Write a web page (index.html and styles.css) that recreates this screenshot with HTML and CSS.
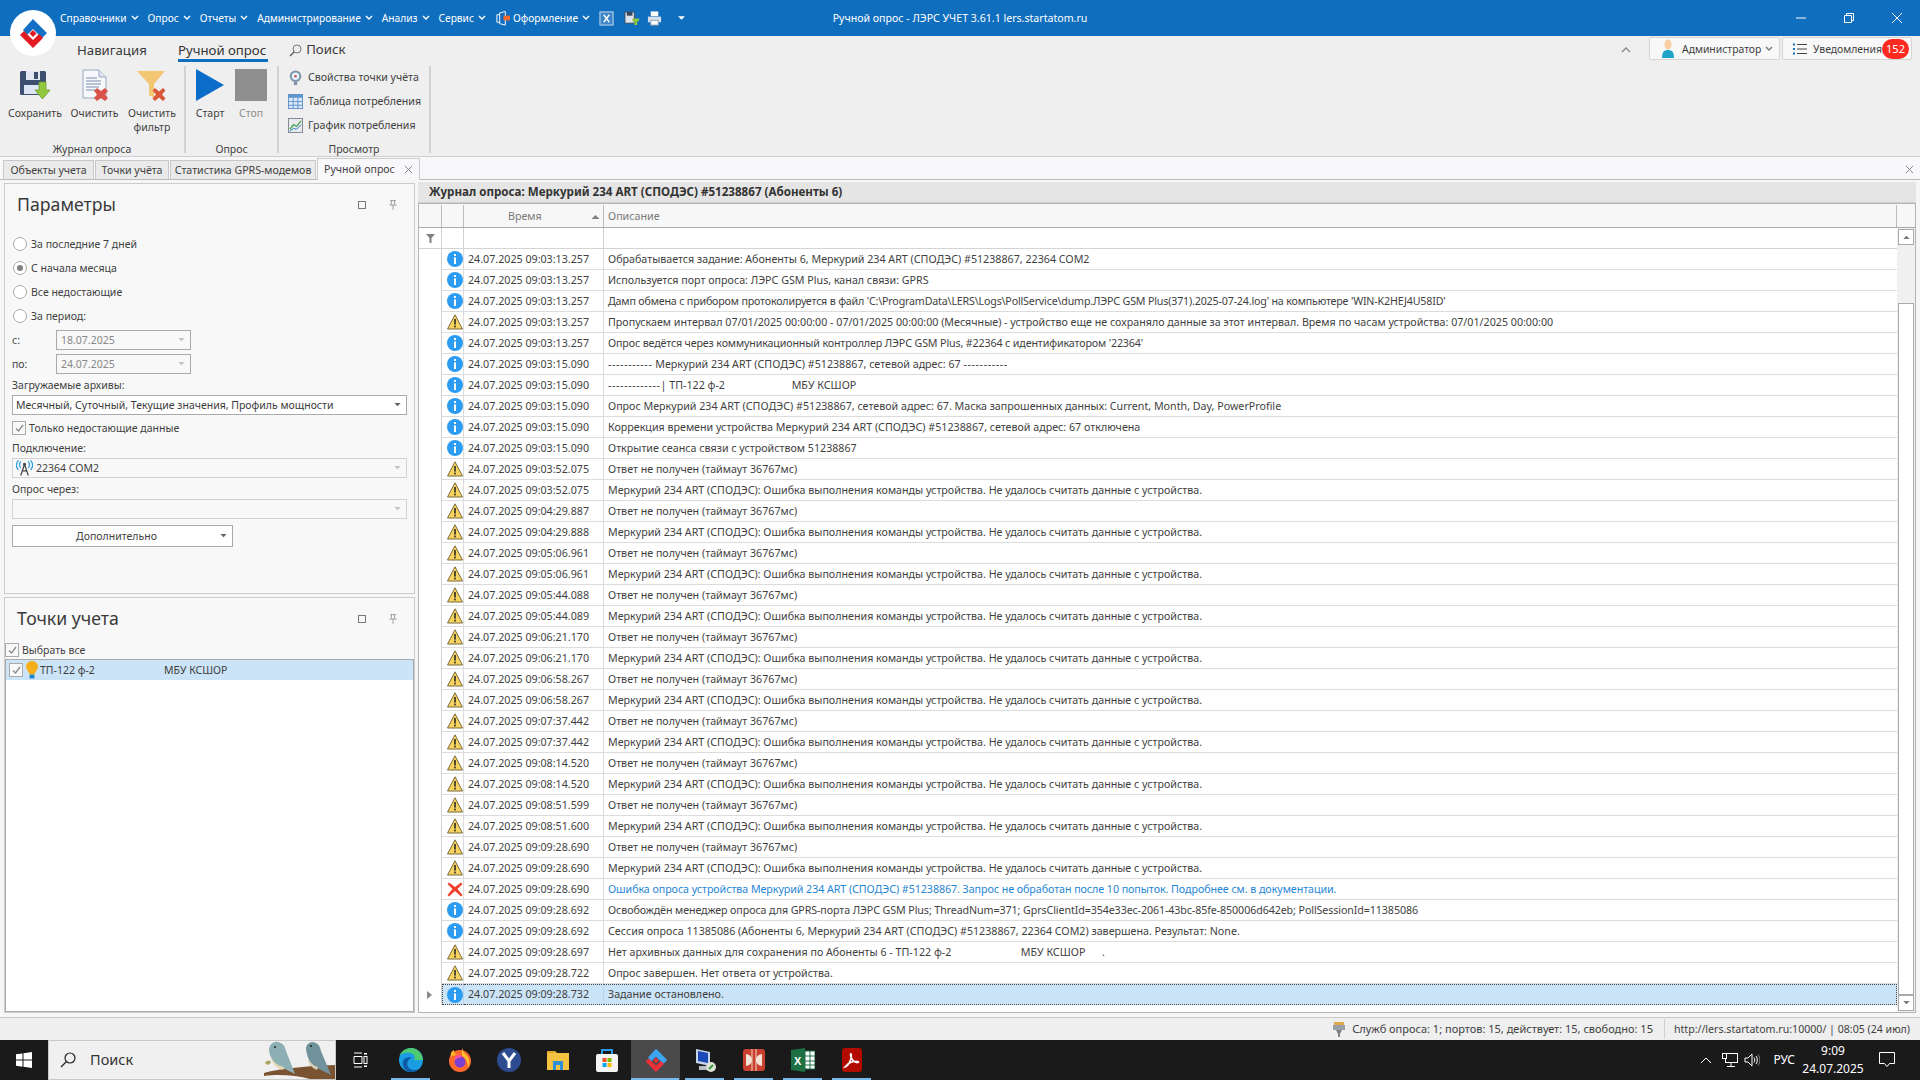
FILE: index.html
```html
<!DOCTYPE html>
<html lang="ru">
<head>
<meta charset="utf-8">
<title>Ручной опрос - ЛЭРС УЧЕТ</title>
<link rel="stylesheet" href="styles.css">
</head>
<body>
<svg class="defs" aria-hidden="true">
  <symbol id="chev" viewBox="0 0 8 6"><path d="M1 1l3 3 3-3" fill="none" stroke="currentColor" stroke-width="1.4"/></symbol>
  <symbol id="caret" viewBox="0 0 8 5"><path d="M0 0h8L4 4z" fill="currentColor"/></symbol>
  <symbol id="info" viewBox="0 0 16 16"><circle cx="8" cy="8" r="8" fill="#2b9cf2"/><rect x="7" y="3" width="2" height="2" fill="#fff"/><rect x="7" y="6.4" width="2" height="6.6" fill="#fff"/></symbol>
  <symbol id="warn" viewBox="0 0 16 16"><path d="M8 .8L15.5 15H.5z" fill="#f7d35f" stroke="#7b6a3d" stroke-width="1"/><rect x="7.1" y="5" width="1.8" height="5.6" fill="#3f3a2c"/><rect x="7.1" y="11.6" width="1.8" height="1.8" fill="#3f3a2c"/></symbol>
  <symbol id="err" viewBox="0 0 16 16"><path d="M2 1.5L8 6l6-4.5 1.5 1.5L10.5 8l5 6L14 15.5 8 10l-6 5.5L.5 14l5-6-5-5z" fill="#f0402c"/></symbol>
  <symbol id="logo" viewBox="0 0 30 30"><path d="M15 1l14 14-5 5-9-9-6 6-4-5z" fill="#1470c4"/><path d="M2 17l4-4 9 9 6-6 4 4-10 10z" fill="#e21b23"/><path d="M15 12l3.500 3.500L15 19l-3.500-3.500z" fill="#e21b23"/></symbol>
  <symbol id="xgray" viewBox="0 0 10 10"><path d="M1 1l8 8M9 1l-8 8" stroke="currentColor" stroke-width="1.1" fill="none"/></symbol>
  <symbol id="pin" viewBox="0 0 10 12"><path d="M1.500.5h7M3 .5v5M7 .5v5M.5 6h9M5 6v6" stroke="currentColor" fill="none"/></symbol>
  <symbol id="chk" viewBox="0 0 9 8"><path d="M1 4.500l2.500 2.500L8 1" fill="none" stroke="#8a8a8a" stroke-width="1.3"/></symbol>
</svg>

<div class="app">
  <header class="titlebar">
    <nav class="menu">
      <span class="mi">Справочники<svg class="chev"><use href="#chev"/></svg></span>
      <span class="mi">Опрос<svg class="chev"><use href="#chev"/></svg></span>
      <span class="mi">Отчеты<svg class="chev"><use href="#chev"/></svg></span>
      <span class="mi">Администрирование<svg class="chev"><use href="#chev"/></svg></span>
      <span class="mi">Анализ<svg class="chev"><use href="#chev"/></svg></span>
      <span class="mi">Сервис<svg class="chev"><use href="#chev"/></svg></span>
      <svg class="qa q0" viewBox="0 0 16 16"><path d="M5 2l6-1.500V15L5 13.500z" fill="none" stroke="#fff"/><path d="M5 4H2v8h3" fill="none" stroke="#fff"/><rect x="9" y="5" width="7" height="5" fill="#f26a2e"/></svg>
      <span class="mi">Оформление<svg class="chev"><use href="#chev"/></svg></span>
      <svg class="qa q1" viewBox="0 0 16 16"><rect x="1" y="1" width="14" height="14" fill="#3f86c8" stroke="#cfe0f0"/><path d="M5 4l6 8M11 4l-6 8" stroke="#fff" stroke-width="1.400"/></svg>
      <svg class="qa q2" viewBox="0 0 16 16"><path d="M1 1h10v12H1z" fill="#dde3ea" stroke="#34495e"/><rect x="3" y="1" width="6" height="4" fill="#34495e"/><path d="M9 8h7v3h-2v4h-3v-4H9z" fill="#8fc63f"/></svg>
      <svg class="qa q3" viewBox="0 0 16 16"><rect x="4" y="0.500" width="8" height="5" fill="#fff"/><rect x="1" y="6" width="14" height="6" fill="#d7e0ea"/><rect x="4" y="10" width="8" height="5" fill="#fff" stroke="#8ea2b6"/></svg>
      <svg class="caret-w"><use href="#caret"/></svg>
    </nav>
    <div class="apptitle">Ручной опрос - ЛЭРС УЧЕТ 3.61.1 lers.startatom.ru</div>
    <div class="winbtns">
      <svg class="wb" viewBox="0 0 12 12"><path d="M1 6h10" stroke="#fff"/></svg>
      <svg class="wb" viewBox="0 0 12 12"><path d="M1.500 3.500h7v7h-7zM3.500 3.500v-2h7v7h-2" fill="none" stroke="#fff"/></svg>
      <svg class="wb" viewBox="0 0 12 12"><path d="M1 1l10 10M11 1L1 11" stroke="#fff"/></svg>
    </div>
    <div class="logo"><svg class="logo-svg"><use href="#logo"/></svg></div>
  </header>

  <section class="ribbon">
    <div class="rtabs">
      <span class="rt nav">Навигация</span>
      <span class="rt on">Ручной опрос</span>
      <span class="rt search"><svg class="sicon" viewBox="0 0 13 13"><circle cx="8" cy="5" r="4" fill="none" stroke="#777"/><path d="M5 8l-4 4" stroke="#555" stroke-width="1.300"/></svg>Поиск</span>
      <div class="rright">
        <svg class="collapse" viewBox="0 0 10 6"><path d="M1 5l4-4 4 4" fill="none" stroke="#888" stroke-width="1.300"/></svg>
        <div class="topbtn admin">
          <svg class="person" viewBox="0 0 14 20"><ellipse cx="7" cy="5.500" rx="3.600" ry="5" fill="#f7cfa0"/><path d="M1 19c0-6 2-8 6-8s6 2 6 8z" fill="#20a3c9"/></svg>
          <span class="tbt">Администратор</span><svg class="chev gray"><use href="#chev"/></svg>
        </div>
        <div class="topbtn notif">
          <svg class="listic" viewBox="0 0 14 12"><path d="M4 1.500h10M4 6h10M4 10.500h10" stroke="#444"/><path d="M0 .5h2v2H0zM0 5h2v2H0zM0 9.500h2v2H0z" fill="#1d72bd"/></svg>
          <span class="tbt">Уведомления</span><b class="badge">152</b>
        </div>
      </div>
    </div>
    <div class="rgroups">
      <div class="rg g1">
        <div class="rbtns">
          <div class="rb b1">
            <svg class="bigic" viewBox="0 0 32 32"><rect x="1" y="2" width="26" height="24" rx="1.500" fill="#3e506f"/><rect x="7" y="2" width="14" height="9" fill="#e3e8f0"/><rect x="15" y="3" width="4" height="7" fill="#3e506f"/><rect x="5" y="16" width="18" height="9" fill="#dce6f4"/><path d="M20 13h7v8h4l-7.500 9-7.500-9h4z" fill="#92c83e" stroke="#679a2c" stroke-width=".8"/></svg>
            <span>Сохранить</span>
          </div>
          <div class="rb b2">
            <svg class="bigic" viewBox="0 0 32 32"><path d="M4 1h16l7 7v21H4z" fill="#f6f8fc" stroke="#9aa8c0"/><path d="M20 1v7h7" fill="#dfe6f3" stroke="#9aa8c0"/><path d="M7 9h11M7 12h15M7 15h15M7 18h13M7 21h10" stroke="#7b8db0"/><path d="M18 19l4 3 4-3 3 3-3 3.500 3 3.500-3 3-4-3-4 3-3-3 3-3.500-3-3.500z" fill="#d9534b"/></svg>
            <span>Очистить</span>
          </div>
          <div class="rb b3">
            <svg class="bigic" viewBox="0 0 32 32"><path d="M1 2h28L18 15v14l-5-3V15z" fill="#f2c673"/><path d="M19 19l4 3.500 4-3.500 2.500 2.500L26 25.500l3.500 4L27 32l-4-3.500-4 3.500-2.500-2.500 3.500-4-3.500-4z" fill="#d9583a"/></svg>
            <span>Очистить<br>фильтр</span>
          </div>
        </div>
        <div class="rglabel">Журнал опроса</div>
      </div>
      <div class="rg g2">
        <div class="rbtns">
          <div class="rb b4">
            <svg class="bigic" viewBox="0 0 32 32"><path d="M2 0l28 16L2 32z" fill="#0b6cc9"/></svg>
            <span>Старт</span>
          </div>
          <div class="rb b5 dis">
            <svg class="bigic" viewBox="0 0 32 32"><rect width="32" height="32" fill="#8f8f8f"/></svg>
            <span>Стоп</span>
          </div>
        </div>
        <div class="rglabel">Опрос</div>
      </div>
      <div class="rg g3">
        <div class="rlist">
          <div class="rli"><svg class="smic" viewBox="0 0 16 18"><circle cx="8" cy="7.500" r="7" fill="#7f93a8"/><circle cx="8" cy="7.500" r="4.500" fill="#dff0fb"/><circle cx="8" cy="7.500" r="1.500" fill="#d9534b"/><rect x="6" y="14" width="4" height="4" fill="#7f93a8"/></svg>Свойства точки учёта</div>
          <div class="rli"><svg class="smic" viewBox="0 0 16 16"><rect x=".5" y=".5" width="15" height="15" fill="#dbe8f7" stroke="#5e93cc"/><rect x=".5" y=".5" width="15" height="3.500" fill="#5e93cc"/><path d="M5.500 4v11M10.500 4v11M1 8h14M1 12h14" stroke="#5e93cc"/></svg>Таблица потребления</div>
          <div class="rli"><svg class="smic" viewBox="0 0 16 16"><rect x=".5" y=".5" width="15" height="15" fill="#e8eaee" stroke="#7d8590"/><path d="M2 12l4-5 3 2 5-6" fill="none" stroke="#43a047" stroke-width="1.300"/><path d="M2 14l4-3 3 1 5-5" fill="none" stroke="#2a78c4"/></svg>График потребления</div>
        </div>
        <div class="rglabel">Просмотр</div>
      </div>
    </div>
  </section>

  <div class="doctabs">
    <span class="dt d1">Объекты учета</span>
    <span class="dt d2">Точки учёта</span>
    <span class="dt d3">Статистика GPRS-модемов</span>
    <span class="dt act">Ручной опрос<svg class="xg"><use href="#xgray"/></svg></span>
    <svg class="xg closeall"><use href="#xgray"/></svg>
  </div>

  <main class="workspace">
    <aside class="leftcol">
      <section class="panel p1">
        <div class="ph"><h2>Параметры</h2><span class="sq"></span><svg class="pin"><use href="#pin"/></svg></div>
        <label class="radio"><i class="rd"></i>За последние 7 дней</label>
        <label class="radio"><i class="rd sel"></i>С начала месяца</label>
        <label class="radio"><i class="rd"></i>Все недостающие</label>
        <label class="radio"><i class="rd"></i>За период:</label>
        <div class="daterow first"><span class="dl">с:</span><div class="field date">18.07.2025<svg class="caret lite"><use href="#caret"/></svg></div></div>
        <div class="daterow"><span class="dl">по:</span><div class="field date">24.07.2025<svg class="caret lite"><use href="#caret"/></svg></div></div>
        <div class="lbl">Загружаемые архивы:</div>
        <div class="field active">Месячный, Суточный, Текущие значения, Профиль мощности<svg class="caret"><use href="#caret"/></svg></div>
        <div class="check c1"><i class="cb"><svg class="chk"><use href="#chk"/></svg></i>Только недостающие данные</div>
        <div class="lbl l2">Подключение:</div>
        <div class="field off"><svg class="antenna" viewBox="0 0 18 16"><path d="M9 4L5 16M9 4l4 12M6.500 11h5" stroke="#444" fill="none" stroke-width="1.300"/><circle cx="9" cy="4" r="1.500" fill="#444"/><path d="M5 1c-1.500 2-1.500 5 0 7M13 1c1.500 2 1.500 5 0 7M2.500 0c-2.500 3-2.500 7 0 10M15.500 0c2.500 3 2.500 7 0 10" stroke="#2a9fe0" fill="none" stroke-width="1.300"/></svg>22364 COM2<svg class="caret lite"><use href="#caret"/></svg></div>
        <div class="lbl l3">Опрос через:</div>
        <div class="field off"><svg class="caret lite"><use href="#caret"/></svg></div>
        <div class="morebtn"><span>Дополнительно</span><svg class="caret"><use href="#caret"/></svg></div>
      </section>
      <section class="panel p2">
        <div class="ph ph2"><h2>Точки учета</h2><span class="sq"></span><svg class="pin"><use href="#pin"/></svg></div>
        <div class="check c2"><i class="cb"><svg class="chk"><use href="#chk"/></svg></i>Выбрать все</div>
        <div class="plist">
          <div class="pitem"><i class="cb"><svg class="chk"><use href="#chk"/></svg></i><svg class="bulb" viewBox="0 0 12 18"><path d="M6 0c3.500 0 6 2.500 6 5.500 0 3-2.500 4.500-3.500 8h-5C2.500 10 0 8.500 0 5.500 0 2.500 2.500 0 6 0z" fill="#f6ae1d"/><rect x="3.500" y="13.500" width="5" height="4" rx="1" fill="#1f86c9"/></svg><span class="pname">ТП-122 ф-2</span><span class="porg">МБУ КСШОР</span></div>
        </div>
      </section>
    </aside>

    <section class="journal">
      <div class="jhead">Журнал опроса: Меркурий 234 ART (СПОДЭС) #51238867 (Абоненты 6)</div>
      <div class="grid">
        <div class="ghead">
          <span class="gh"></span><span class="gh"></span>
          <span class="gh tm">Время<svg class="caret up"><use href="#caret"/></svg></span>
          <span class="gh ds">Описание</span>
          <span class="gh end"></span>
        </div>
        <div class="gbody">
          <div class="gmain">
            <div class="gfilter">
              <span class="gf"><svg class="funnel" viewBox="0 0 9 9"><path d="M0 0h9L5.500 4v5h-2V4z" fill="#808080"/></svg></span><span class="gf"></span><span class="gf"></span><span class="gf"></span>
            </div>
            <div class="rows">
              <div class="row"><i></i><span class="ic"><svg><use href="#info"/></svg></span><span class="c">24.07.2025 09:03:13.257</span><span class="d">Обрабатывается задание: Абоненты 6, Меркурий 234 ART (СПОДЭС) #51238867, 22364 COM2</span></div>
              <div class="row"><i></i><span class="ic"><svg><use href="#info"/></svg></span><span class="c">24.07.2025 09:03:13.257</span><span class="d">Используется порт опроса: ЛЭРС GSM Plus, канал связи: GPRS</span></div>
              <div class="row"><i></i><span class="ic"><svg><use href="#info"/></svg></span><span class="c">24.07.2025 09:03:13.257</span><span class="d t1">Дамп обмена с прибором протоколируется в файл 'C:\ProgramData\LERS\Logs\PollService\dump.ЛЭРС GSM Plus(371).2025-07-24.log' на компьютере 'WIN-K2HEJ4U58ID'</span></div>
              <div class="row"><i></i><span class="ic"><svg><use href="#warn"/></svg></span><span class="c">24.07.2025 09:03:13.257</span><span class="d">Пропускаем интервал 07/01/2025 00:00:00 - 07/01/2025 00:00:00 (Месячные) - устройство еще не сохраняло данные за этот интервал. Время по часам устройства: 07/01/2025 00:00:00</span></div>
              <div class="row"><i></i><span class="ic"><svg><use href="#info"/></svg></span><span class="c">24.07.2025 09:03:13.257</span><span class="d t2">Опрос ведётся через коммуникационный контроллер ЛЭРС GSM Plus, #22364 с идентификатором '22364'</span></div>
              <div class="row"><i></i><span class="ic"><svg><use href="#info"/></svg></span><span class="c">24.07.2025 09:03:15.090</span><span class="d"><span class="dash">-----------</span> Меркурий 234 ART (СПОДЭС) #51238867, сетевой адрес: 67 <span class="dash">-----------</span></span></div>
              <div class="row"><i></i><span class="ic"><svg><use href="#info"/></svg></span><span class="c">24.07.2025 09:03:15.090</span><span class="d"><span class="dash">-------------</span>| ТП-122 ф-2                        МБУ КСШОР</span></div>
              <div class="row"><i></i><span class="ic"><svg><use href="#info"/></svg></span><span class="c">24.07.2025 09:03:15.090</span><span class="d">Опрос Меркурий 234 ART (СПОДЭС) #51238867, сетевой адрес: 67. Маска запрошенных данных: Current, Month, Day, PowerProfile</span></div>
              <div class="row"><i></i><span class="ic"><svg><use href="#info"/></svg></span><span class="c">24.07.2025 09:03:15.090</span><span class="d">Коррекция времени устройства Меркурий 234 ART (СПОДЭС) #51238867, сетевой адрес: 67 отключена</span></div>
              <div class="row"><i></i><span class="ic"><svg><use href="#info"/></svg></span><span class="c">24.07.2025 09:03:15.090</span><span class="d">Открытие сеанса связи с устройством 51238867</span></div>
              <div class="row"><i></i><span class="ic"><svg><use href="#warn"/></svg></span><span class="c">24.07.2025 09:03:52.075</span><span class="d">Ответ не получен (таймаут 36767мс)</span></div>
              <div class="row"><i></i><span class="ic"><svg><use href="#warn"/></svg></span><span class="c">24.07.2025 09:03:52.075</span><span class="d">Меркурий 234 ART (СПОДЭС): Ошибка выполнения команды устройства. Не удалось считать данные с устройства.</span></div>
              <div class="row"><i></i><span class="ic"><svg><use href="#warn"/></svg></span><span class="c">24.07.2025 09:04:29.887</span><span class="d">Ответ не получен (таймаут 36767мс)</span></div>
              <div class="row"><i></i><span class="ic"><svg><use href="#warn"/></svg></span><span class="c">24.07.2025 09:04:29.888</span><span class="d">Меркурий 234 ART (СПОДЭС): Ошибка выполнения команды устройства. Не удалось считать данные с устройства.</span></div>
              <div class="row"><i></i><span class="ic"><svg><use href="#warn"/></svg></span><span class="c">24.07.2025 09:05:06.961</span><span class="d">Ответ не получен (таймаут 36767мс)</span></div>
              <div class="row"><i></i><span class="ic"><svg><use href="#warn"/></svg></span><span class="c">24.07.2025 09:05:06.961</span><span class="d">Меркурий 234 ART (СПОДЭС): Ошибка выполнения команды устройства. Не удалось считать данные с устройства.</span></div>
              <div class="row"><i></i><span class="ic"><svg><use href="#warn"/></svg></span><span class="c">24.07.2025 09:05:44.088</span><span class="d">Ответ не получен (таймаут 36767мс)</span></div>
              <div class="row"><i></i><span class="ic"><svg><use href="#warn"/></svg></span><span class="c">24.07.2025 09:05:44.089</span><span class="d">Меркурий 234 ART (СПОДЭС): Ошибка выполнения команды устройства. Не удалось считать данные с устройства.</span></div>
              <div class="row"><i></i><span class="ic"><svg><use href="#warn"/></svg></span><span class="c">24.07.2025 09:06:21.170</span><span class="d">Ответ не получен (таймаут 36767мс)</span></div>
              <div class="row"><i></i><span class="ic"><svg><use href="#warn"/></svg></span><span class="c">24.07.2025 09:06:21.170</span><span class="d">Меркурий 234 ART (СПОДЭС): Ошибка выполнения команды устройства. Не удалось считать данные с устройства.</span></div>
              <div class="row"><i></i><span class="ic"><svg><use href="#warn"/></svg></span><span class="c">24.07.2025 09:06:58.267</span><span class="d">Ответ не получен (таймаут 36767мс)</span></div>
              <div class="row"><i></i><span class="ic"><svg><use href="#warn"/></svg></span><span class="c">24.07.2025 09:06:58.267</span><span class="d">Меркурий 234 ART (СПОДЭС): Ошибка выполнения команды устройства. Не удалось считать данные с устройства.</span></div>
              <div class="row"><i></i><span class="ic"><svg><use href="#warn"/></svg></span><span class="c">24.07.2025 09:07:37.442</span><span class="d">Ответ не получен (таймаут 36767мс)</span></div>
              <div class="row"><i></i><span class="ic"><svg><use href="#warn"/></svg></span><span class="c">24.07.2025 09:07:37.442</span><span class="d">Меркурий 234 ART (СПОДЭС): Ошибка выполнения команды устройства. Не удалось считать данные с устройства.</span></div>
              <div class="row"><i></i><span class="ic"><svg><use href="#warn"/></svg></span><span class="c">24.07.2025 09:08:14.520</span><span class="d">Ответ не получен (таймаут 36767мс)</span></div>
              <div class="row"><i></i><span class="ic"><svg><use href="#warn"/></svg></span><span class="c">24.07.2025 09:08:14.520</span><span class="d">Меркурий 234 ART (СПОДЭС): Ошибка выполнения команды устройства. Не удалось считать данные с устройства.</span></div>
              <div class="row"><i></i><span class="ic"><svg><use href="#warn"/></svg></span><span class="c">24.07.2025 09:08:51.599</span><span class="d">Ответ не получен (таймаут 36767мс)</span></div>
              <div class="row"><i></i><span class="ic"><svg><use href="#warn"/></svg></span><span class="c">24.07.2025 09:08:51.600</span><span class="d">Меркурий 234 ART (СПОДЭС): Ошибка выполнения команды устройства. Не удалось считать данные с устройства.</span></div>
              <div class="row"><i></i><span class="ic"><svg><use href="#warn"/></svg></span><span class="c">24.07.2025 09:09:28.690</span><span class="d">Ответ не получен (таймаут 36767мс)</span></div>
              <div class="row"><i></i><span class="ic"><svg><use href="#warn"/></svg></span><span class="c">24.07.2025 09:09:28.690</span><span class="d">Меркурий 234 ART (СПОДЭС): Ошибка выполнения команды устройства. Не удалось считать данные с устройства.</span></div>
              <div class="row"><i></i><span class="ic"><svg><use href="#err"/></svg></span><span class="c">24.07.2025 09:09:28.690</span><span class="d link t4">Ошибка опроса устройства Меркурий 234 ART (СПОДЭС) #51238867. Запрос не обработан после 10 попыток. Подробнее см. в документации.</span></div>
              <div class="row"><i></i><span class="ic"><svg><use href="#info"/></svg></span><span class="c">24.07.2025 09:09:28.692</span><span class="d t3">Освобождён менеджер опроса для GPRS-порта ЛЭРС GSM Plus; ThreadNum=371; GprsClientId=354e33ec-2061-43bc-85fe-850006d642eb; PollSessionId=11385086</span></div>
              <div class="row"><i></i><span class="ic"><svg><use href="#info"/></svg></span><span class="c">24.07.2025 09:09:28.692</span><span class="d">Сессия опроса 11385086 (Абоненты 6, Меркурий 234 ART (СПОДЭС) #51238867, 22364 COM2) завершена. Результат: None.</span></div>
              <div class="row"><i></i><span class="ic"><svg><use href="#warn"/></svg></span><span class="c">24.07.2025 09:09:28.697</span><span class="d">Нет архивных данных для сохранения по Абоненты 6 - ТП-122 ф-2                         МБУ КСШОР      .</span></div>
              <div class="row"><i></i><span class="ic"><svg><use href="#warn"/></svg></span><span class="c">24.07.2025 09:09:28.722</span><span class="d">Опрос завершен. Нет ответа от устройства.</span></div>
              <div class="row cur"><i><svg class="rowmark" viewBox="0 0 5 8"><path d="M0 0l5 4-5 4z" fill="#888"/></svg></i><span class="ic"><svg><use href="#info"/></svg></span><span class="c">24.07.2025 09:09:28.732</span><span class="d">Задание остановлено.</span></div>
            </div>
          </div>
          <div class="vscroll">
            <span class="sb"><svg class="caret up"><use href="#caret"/></svg></span>
            <span class="strack"></span>
            <span class="sthumb"></span>
            <span class="sb"><svg class="caret"><use href="#caret"/></svg></span>
          </div>
        </div>
      </div>
    </section>
  </main>

  <footer class="statusbar">
    <svg class="plug" viewBox="0 0 14 16"><rect x="2" y="1" width="10" height="3" fill="#e0a94a"/><rect x="1" y="4" width="12" height="5" fill="#9aa0a6"/><path d="M4 9h6l-2 4v3H6v-3z" fill="#7c8288"/></svg>
    <span>Служб опроса: 1; портов: 15, действует: 15, свободно: 15</span>
    <i class="ssep"></i>
    <span class="surl">http://lers.startatom.ru:10000/ | 08:05 (24 июл)</span>
  </footer>

  <div class="taskbar">
    <div class="start"><svg class="winlogo" viewBox="0 0 16 16"><path d="M0 2.300l6.500-.9v6.200H0zM7.500 1.300L16 0v7.600H7.500zM0 8.500h6.500v6.200L0 13.800zM7.500 8.500H16V16l-8.500-1.200z" fill="#fff"/></svg></div>
    <div class="tsearch">
      <svg class="tsi" viewBox="0 0 16 16"><circle cx="10" cy="6" r="5" fill="none" stroke="#222" stroke-width="1.200"/><path d="M6.500 9.500L1 15" stroke="#222" stroke-width="1.200"/></svg>
      <span>Поиск</span>
      <svg class="birds" viewBox="0 0 76 38"><path d="M4 32c14-4 40-7 72-8v14H50C36 34 18 33 4 35z" fill="#7a5330"/><path d="M5 22c2-3 5-3 6-1-1 3-4 4-6 1zM14 10c2 0 3 2 2 5-2 0-3-2-2-5z" fill="#a9a85c"/><path d="M9 9c0-5 4-9 9-8 5 1 7 4 8 9l9 23-12-6c-8-2-13-9-14-18z" fill="#8cb0b4"/><circle cx="15" cy="6" r="1" fill="#222"/><path d="M11 16c3 6 8 9 13 10l-1 3c-6-2-11-6-12-13z" fill="#e3d5ae"/><path d="M46 8c0-4 3-7 7-7 5 1 7 4 8 9l10 24-12-6c-8-3-12-11-13-20z" fill="#6f929c"/><circle cx="51" cy="5" r="1" fill="#222"/><path d="M48 17c2 5 6 8 10 9l-1 3c-5-2-9-6-9-12z" fill="#d6cdb0"/></svg>
    </div>
    <div class="taskview"><svg class="tvi" viewBox="0 0 16 16"><path d="M1 1h8M1 15h8M1 4.500h8v7H1z" fill="none" stroke="#fff"/><rect x="11" y="4.500" width="3" height="7" fill="none" stroke="#fff"/><rect x="11" y="1" width="3" height="1.500" fill="#fff"/><rect x="11" y="13.500" width="3" height="1.500" fill="#fff"/></svg></div>
    <div class="tapps">
      <span class="ta open"><svg viewBox="0 0 24 24"><circle cx="12" cy="12" r="12" fill="#1b9de2"/><path d="M24 13c0-7-5-13-12-13C6 0 2 4 .5 8c3-4 12-5 15 0 1 2 0 3-1 4h9.500z" fill="#4ecb71"/><path d="M11 24C6 23 3 18 4 13c1-3 6-5 9-3-4 1-6 5-4 9 2 3 6 4 11 2-2 2-5 3-9 3z" fill="#0c59a4"/></svg></span>
      <span class="ta"><svg viewBox="0 0 24 24"><circle cx="12" cy="13" r="11" fill="#ff6a2b"/><path d="M14 0c1 4 4 6 6 9 2 4 2 8 0 11 0-6-2-10-6-12z" fill="#ffc02e"/><path d="M3 8C2 5 4 3 6 2c0 3 1 4 3 5z" fill="#ffb52a"/><circle cx="12" cy="14" r="5.500" fill="#7b3fd1"/><path d="M7 9c3-3 7-2 8 0-3 0-6 1-8 3z" fill="#ff4fa0"/></svg></span>
      <span class="ta"><svg viewBox="0 0 24 24"><circle cx="12" cy="12" r="12" fill="#2d4b8e"/><path d="M6 5l6 8 6-8M12 13v7" fill="none" stroke="#fff" stroke-width="3"/></svg></span>
      <span class="ta"><svg viewBox="0 0 24 24"><path d="M1 3h8l2 2h12v17H1z" fill="#f5c342"/><rect x="7" y="13" width="10" height="9" fill="#2d8fd9"/><rect x="10" y="17" width="4" height="5" fill="#f5c342"/><rect x="1" y="3" width="8" height="2" fill="#e0a526"/></svg></span>
      <span class="ta"><svg viewBox="0 0 24 24"><rect x="1" y="6" width="22" height="18" rx="2" fill="#f4f4f4"/><path d="M7 6V2h10v4" fill="none" stroke="#2b9de8" stroke-width="2"/><rect x="7.500" y="10" width="4" height="4" fill="#f25022"/><rect x="12.500" y="10" width="4" height="4" fill="#7fba00"/><rect x="7.500" y="15" width="4" height="4" fill="#00a4ef"/><rect x="12.500" y="15" width="4" height="4" fill="#ffb900"/></svg></span>
      <span class="ta open act"><svg viewBox="0 0 30 30"><path d="M15 1l14 14-5 5-9-9-6 6-4-5z" fill="#3da5f0"/><path d="M2 17l4-4 9 9 6-6 4 4-10 10z" fill="#e8303a"/><path d="M15 12l3.500 3.500L15 19l-3.500-3.500z" fill="#e8303a"/></svg></span>
      <span class="ta open"><svg viewBox="0 0 24 24"><path d="M3 1l14 3v14L3 15z" fill="#c8d4e8"/><path d="M5 3l10 2v10L5 13z" fill="#1c49b8"/><path d="M6 18h12v4H6z" fill="#b8bec6"/><circle cx="18" cy="19" r="5" fill="#dfe4d8"/><path d="M16 21l4-4" stroke="#3a9a3a" stroke-width="2"/></svg></span>
      <span class="ta open"><svg viewBox="0 0 24 24"><rect x="1" y="1" width="22" height="22" rx="3" fill="#c9402f"/><path d="M10 1v22M14 1v22" stroke="#f2d6c8" stroke-width="1"/><path d="M4 6c5 1 6 4 6 6s-1 5-6 6zM20 6c-5 1-6 4-6 6s1 5 6 6z" fill="#f4e4d8"/></svg></span>
      <span class="ta open"><svg viewBox="0 0 24 24"><path d="M0 2l14-2v24L0 22z" fill="#1d7044"/><rect x="14" y="3" width="10" height="18" fill="#fff" stroke="#1d7044"/><path d="M14 8h10M14 13h10M14 17h10M19 3v18" stroke="#1d7044"/><text x="3" y="17" class="xl">X</text></svg></span>
      <span class="ta open"><svg viewBox="0 0 24 24"><rect x="2" y="0" width="20" height="24" rx="3" fill="#b30b00"/><path d="M5 19c3-1 5-5 6-9 1-3 0-5-.5-4-.5 1 1 5 3 7 2 2 5 2 5 1s-4-1-7 0-5 3-6.500 5z" fill="none" stroke="#fff" stroke-width="1.500"/></svg></span>
    </div>
    <div class="tray">
      <svg class="tr1" viewBox="0 0 12 7"><path d="M1 6l5-5 5 5" fill="none" stroke="#fff"/></svg>
      <svg class="tr2" viewBox="0 0 16 16"><rect x="3.500" y="1.500" width="12" height="9" fill="none" stroke="#fff"/><rect x=".5" y="1.500" width="4" height="5" fill="#1a1a1a" stroke="#fff"/><path d="M9 11v3M5 14.500h8" stroke="#fff"/></svg>
      <svg class="tr3" viewBox="0 0 16 14"><path d="M1 5h3l4-4v12L4 9H1z" fill="none" stroke="#fff"/><path d="M10 4.500c1 1.500 1 3.500 0 5M12 3c1.800 2.500 1.800 5.500 0 8" fill="none" stroke="#fff"/><path d="M14 1.500c2.500 3.500 2.500 7.500 0 11" fill="none" stroke="#888"/></svg>
      <span class="lang">РУС</span>
      <div class="clock"><span>9:09</span><span>24.07.2025</span></div>
      <svg class="tr4" viewBox="0 0 16 16"><path d="M.5 .5h15v11h-5l-2.500 3-2.500-3h-5z" fill="none" stroke="#fff"/></svg>
    </div>
  </div>
</div>
</body>
</html>
```

FILE: styles.css
```css
* { box-sizing: border-box; }
html, body { margin: 0; height: 100%; overflow: hidden; }
body { font: 10.7px/1.2 "Noto Sans", "Liberation Sans", sans-serif; color: #3f3f3f; background: #efefef; }
i { font-style: normal; }
.defs { width: 0; height: 0; display: block; }
.app { width: 1920px; height: 1080px; display: flex; flex-direction: column; position: relative; }

/* title bar */
.titlebar { height: 36px; background: #106ebe; color: #fff; display: grid; grid-template-columns: 1fr auto 1fr; align-items: center; flex: none; }
.menu { display: flex; align-items: center; padding-left: 60px; font-size: 10.2px; }
.mi { display: flex; align-items: center; margin-right: 9px; white-space: nowrap; }
.chev { width: 8px; height: 6px; margin-left: 4px; color: #fff; }
.chev.gray { color: #777; }
.qa { width: 15px; height: 15px; flex: none; }
.q0 { margin-right: 3px; }
.q1 { margin-right: 10px; }
.q2 { margin-right: 8px; }
.caret-w { width: 7px; height: 5px; color: #fff; margin-left: 16px; }
.apptitle { white-space: nowrap; font-size: 10.6px; }
.winbtns { display: flex; justify-content: flex-end; padding-right: 17px; gap: 36px; }
.wb { width: 12px; height: 12px; }
.logo { position: absolute; left: 10px; top: 10px; width: 46px; height: 46px; border-radius: 50%; background: #fff; display: flex; align-items: center; justify-content: center; }
.logo-svg { width: 30px; height: 30px; }

/* ribbon */
.ribbon { height: 121px; flex: none; border-bottom: 1px solid #cfcfcf; background: #efefef; display: flex; flex-direction: column; font-size: 10.5px; }
.rtabs { height: 30px; display: flex; padding-left: 77px; flex: none; }
.rt { font-size: 13.2px; height: 26px; line-height: 28px; color: #3a3a3a; white-space: nowrap; }
.rt.nav { width: 101px; }
.rt.on { border-bottom: 3px solid #106ebe; color: #333; padding-right: 2px; }
.rt.search { display: flex; align-items: center; margin-left: 21px; line-height: 1; height: 28px; }
.sicon { width: 13px; height: 13px; margin-right: 4px; }
.rright { margin-left: auto; display: flex; align-items: flex-start; padding: 1px 8px 0 0; font-size: 10.4px; }
.collapse { width: 10px; height: 6px; margin: 10px 18px 0 0; }
.topbtn { height: 23px; background: #f8f8f8; border: 1px solid #d4d4d4; border-radius: 2px; display: flex; align-items: center; }
.tbt { padding-top: 2px; }
.admin { width: 131px; padding-left: 11px; margin-right: 2px; }
.notif { width: 130px; padding-left: 10px; }
.person { width: 14px; height: 20px; margin-right: 7px; }
.listic { width: 14px; height: 12px; margin-right: 6px; }
.badge { background: #ff2a20; color: #fff; font-weight: 400; font-size: 11px; width: 27px; height: 20px; border-radius: 10px; display: flex; align-items: center; justify-content: center; margin: 0 2px 0 auto; }
.rgroups { display: flex; flex: 1; }
.rg { height: 87px; border-right: 2px solid #d2d2d2; display: flex; flex-direction: column; }
.g1 { width: 186px; }
.g2 { width: 93px; }
.g3 { width: 152px; }
.rbtns { display: flex; height: 76px; padding-top: 3px; flex: none; }
.g1 .rbtns { padding-left: 4px; }
.g2 .rbtns { padding-left: 4px; }
.rb { display: flex; flex-direction: column; align-items: center; text-align: center; line-height: 14px; }
.rb span { margin-top: 5px; }
.b1 { width: 62px; } .b2 { width: 57px; } .b3 { width: 58px; }
.b4 { width: 40px; } .b5 { width: 42px; }
.bigic { width: 32px; height: 32px; flex: none; }
.dis { color: #8d8d8d; }
.rglabel { text-align: center; line-height: 15px; flex: none; }
.rlist { height: 76px; margin-top: -1px; margin-bottom: 1px; padding: 0 0 0 9px; display: flex; flex-direction: column; flex: none; font-size: 10.6px; }
.rli { height: 24px; display: flex; align-items: center; white-space: nowrap; }
.smic { width: 15px; height: 15px; margin-right: 5px; flex: none; }

/* document tabs */
.doctabs { height: 23px; flex: none; background: #f8f8fa; display: flex; align-items: flex-end; padding-left: 3px; border-bottom: 1px solid #bbb; font-size: 10.6px; }
.dt { height: 19px; background: #eaeaea; border: 1px solid #c8c8c8; border-bottom: 0; margin-right: 1px; display: flex; align-items: center; justify-content: center; white-space: nowrap; }
.d1 { width: 91px; } .d2 { width: 74px; } .d3 { width: 146px; }
.dt.act { width: 103px; height: 22px; background: #f8f8fa; border-color: #ccc; justify-content: flex-start; padding-left: 6px; margin-bottom: -1px; position: relative; }
.xg { width: 9px; height: 9px; color: #888; }
.dt.act .xg { margin-left: auto; margin-right: 6px; }
.closeall { margin: 0 6px 5px auto; }

/* workspace */
.workspace { flex: 1; min-height: 0; display: flex; background: #f6f6f6; border-bottom: 1px solid #c9c9c9; padding-bottom: 4px; }
.leftcol { width: 417px; flex: none; padding: 3px 2px 0 4px; display: flex; flex-direction: column; gap: 3px; font-size: 10.5px; }
.panel { background: #f8f8f8; border: 1px solid #ccc; padding: 0 7px; }
.p1 { height: 411px; flex: none; }
.p2 { flex: 1; display: flex; flex-direction: column; padding: 0; min-height: 0; }
.ph { height: 42px; display: flex; align-items: center; padding-left: 11px; }
.ph h2 { margin: 0; font-weight: 400; font-size: 17.7px; color: #3b3b3b; flex: 1; }
.ph .sq { width: 8px; height: 8px; border: 1px solid #777; margin-right: 23px; }
.ph .pin { width: 8px; height: 10px; color: #888; margin-right: 17px; }
.p1 .ph { margin: 0 -7px 6px; padding-left: 12px; }
.ph2 { padding-left: 12px; }
.radio { height: 24px; display: flex; align-items: center; margin-left: 1px; }
.rd { width: 14px; height: 14px; border-radius: 50%; border: 1px solid #a8a8a8; background: #fff; margin-right: 4px; display: flex; align-items: center; justify-content: center; }
.rd.sel::after { content: ""; width: 6px; height: 6px; border-radius: 50%; background: #808080; }
.daterow { height: 20px; display: flex; align-items: center; margin-bottom: 4px; }
.daterow.first { margin-top: 2px; }
.dl { width: 44px; }
.field { height: 20px; border: 1px solid #d2d2d2; display: flex; align-items: center; padding-left: 3px; position: relative; white-space: nowrap; }
.field.date { width: 135px; border-color: #aaa; color: #888; padding-left: 4px; }
.field.active { background: #fff; border-color: #aaa; color: #3a3a3a; }
.field.off { color: #3f3f3f; }
.caret { width: 7px; height: 4px; color: #666; margin-left: auto; margin-right: 5px; flex: none; }
.caret.lite { color: #c4c4c4; }
.lbl { height: 16px; line-height: 16px; }
.lbl.l2 { margin-top: 5px; margin-bottom: 2px; }
.lbl.l3 { margin-top: 3px; margin-bottom: 2px; }
.daterow + .lbl { margin-top: -1px; margin-bottom: 2px; }
.antenna { width: 17px; height: 16px; margin-right: 3px; flex: none; }
.check { display: flex; align-items: center; }
.cb { width: 14px; height: 14px; border: 1px solid #aaa; background: #f8f8f8; display: flex; align-items: center; justify-content: center; margin-right: 3px; flex: none; }
.chk { width: 9px; height: 8px; }
.check.c1 { margin-top: 6px; height: 14px; }
.morebtn { width: 221px; height: 22px; margin-top: 6px; border: 1px solid #aaa; background: #fff; display: flex; align-items: center; }
.morebtn span { flex: 1; text-align: center; }
.check.c2 { height: 14px; margin-top: 3px; }
.plist { flex: 1; background: #fff; border: 1px solid #aaa; margin-top: 2px; }
.pitem { height: 20px; background: #cce4f7; display: flex; align-items: center; padding-left: 3px; white-space: pre; }
.bulb { width: 12px; height: 18px; margin-right: 2px; flex: none; }
.pname { width: 124px; }

/* journal */
.journal { flex: 1; min-width: 0; display: flex; flex-direction: column; margin: 0 4px 0 1px; padding-top: 2px; }
.jhead { height: 21px; background: #e5e5e5; font-weight: 700; font-size: 11.6px; line-height: 19px; padding-left: 11px; color: #333; flex: none; border-bottom: 1px solid #d0d0d0; white-space: nowrap; }
.grid { flex: 1; min-height: 0; display: flex; flex-direction: column; background: #fff; border: 1px solid #b4b4b4; }
.ghead, .gfilter, .row { display: grid; grid-template-columns: 23px 22px 140px 1fr; }
.ghead { grid-template-columns: 23px 22px 140px 1fr 18px; height: 24px; background: #f7f7f7; border-bottom: 1px solid #aaa; flex: none; }
.gh { border-right: 1px solid #bbb; line-height: 22px; color: #7a7a7a; padding-left: 5px; margin: 1px 0; }
.gh.tm { display: flex; align-items: center; padding-left: 44px; }
.gh.tm .caret { margin-right: 3px; width: 9px; height: 5px; color: #808080; }
.caret.up { transform: scaleY(-1); }
.gh.ds { padding-left: 4px; }
.gh.end { border: 0; }
.gbody { flex: 1; min-height: 0; display: flex; }
.gmain { flex: 1; min-width: 0; }
.gfilter { height: 21px; border-bottom: 1px solid #d4d4d4; }
.gf { border-right: 1px solid #d0d0d0; display: flex; align-items: center; }
.gf:last-child { border: 0; }
.funnel { width: 9px; height: 9px; margin-left: 7px; }
.row { height: 21px; align-items: stretch; }
.row i { display: flex; align-items: center; padding-left: 8px; border-right: 1px solid #d0d0d0; }
.rowmark { width: 5px; height: 8px; }
.row .ic, .row .c, .row .d { border-bottom: 1px solid #dcdcdc; display: flex; align-items: center; white-space: pre; }
.row .ic { justify-content: flex-end; border-right: 1px solid #dcdcdc; }
.row .ic svg { width: 16px; height: 16px; }
.row .c { padding-left: 4px; border-right: 1px solid #dcdcdc; }
.row .d { padding-left: 4px; overflow: hidden; }
.row .d.t1 { letter-spacing: -.18px; }
.row .d.t2 { letter-spacing: -.14px; }
.row .d.t3 { letter-spacing: -.1px; }
.row .d.t4 { letter-spacing: -.06px; }
.dash { letter-spacing: .6px; }
.d.link { color: #1f86d6; }
.row.cur .ic, .row.cur .c, .row.cur .d { background: #cce4f7; border-top: 1px dotted #444; border-bottom: 1px dotted #444; border-right-color: #b9d4ea; }
.row.cur .ic { border-left: 1px dotted #444; }
.row.cur .d { border-right: 1px dotted #444; }
.vscroll { width: 18px; flex: none; display: flex; flex-direction: column; background: #f0f0f0; padding: 1px; }
.sb { height: 16px; flex: none; background: #fff; border: 1px solid #aaa; display: flex; align-items: center; justify-content: center; }
.sb .caret { margin: 0; color: #777; }
.strack { height: 58px; flex: none; }
.sthumb { flex: 1; background: #fff; border: 1px solid #aaa; }

/* status bar */
.statusbar { height: 22px; flex: none; background: #efefef; display: flex; align-items: center; justify-content: flex-end; padding-right: 10px; white-space: nowrap; font-size: 11px; }
.surl { font-size: 10.6px; }
.plug { width: 14px; height: 16px; margin-right: 6px; }
.ssep { width: 1px; height: 20px; background: #d0d0d0; margin: 0 9px 0 11px; }

/* taskbar */
.taskbar { height: 40px; flex: none; background: #1a1a1a; color: #fff; display: flex; align-items: stretch; }
.start { width: 48px; display: flex; align-items: center; justify-content: center; }
.winlogo { width: 16px; height: 16px; }
.tsearch { width: 288px; background: #f0f0f0; color: #333; display: flex; align-items: center; font-size: 14.5px; padding-left: 11px; border: 1px solid #c9c9c9; overflow: hidden; }
.tsi { width: 16px; height: 16px; margin-right: 14px; }
.birds { width: 76px; height: 38px; margin-left: auto; flex: none; margin-right: -1px; }
.taskview { width: 50px; display: flex; align-items: center; justify-content: center; }
.tvi { width: 16px; height: 16px; }
.tapps { display: flex; }
.ta { width: 49px; display: flex; align-items: center; justify-content: center; position: relative; }
.ta svg { width: 24px; height: 24px; }
.xl { font: 700 11px "Liberation Sans", sans-serif; fill: #fff; }
.ta.open::after { content: ""; position: absolute; left: 5px; right: 5px; bottom: 0; height: 2px; background: #76b9ed; }
.ta.act { background: #4a4a4a; }
.ta.act::after { left: 0; right: 1px; }
.tray { margin-left: auto; display: flex; align-items: center; padding-right: 25px; }
.tr1 { width: 12px; height: 7px; margin-right: 10px; }
.tr2 { width: 16px; height: 16px; margin-right: 6px; }
.tr3 { width: 16px; height: 14px; margin-right: 13px; }
.lang { margin-right: 8px; font-size: 12px; }
.clock { width: 60px; display: flex; flex-direction: column; align-items: center; font-size: 12px; gap: 3px; margin-right: 16px; }
.tr4 { width: 16px; height: 16px; }
```
